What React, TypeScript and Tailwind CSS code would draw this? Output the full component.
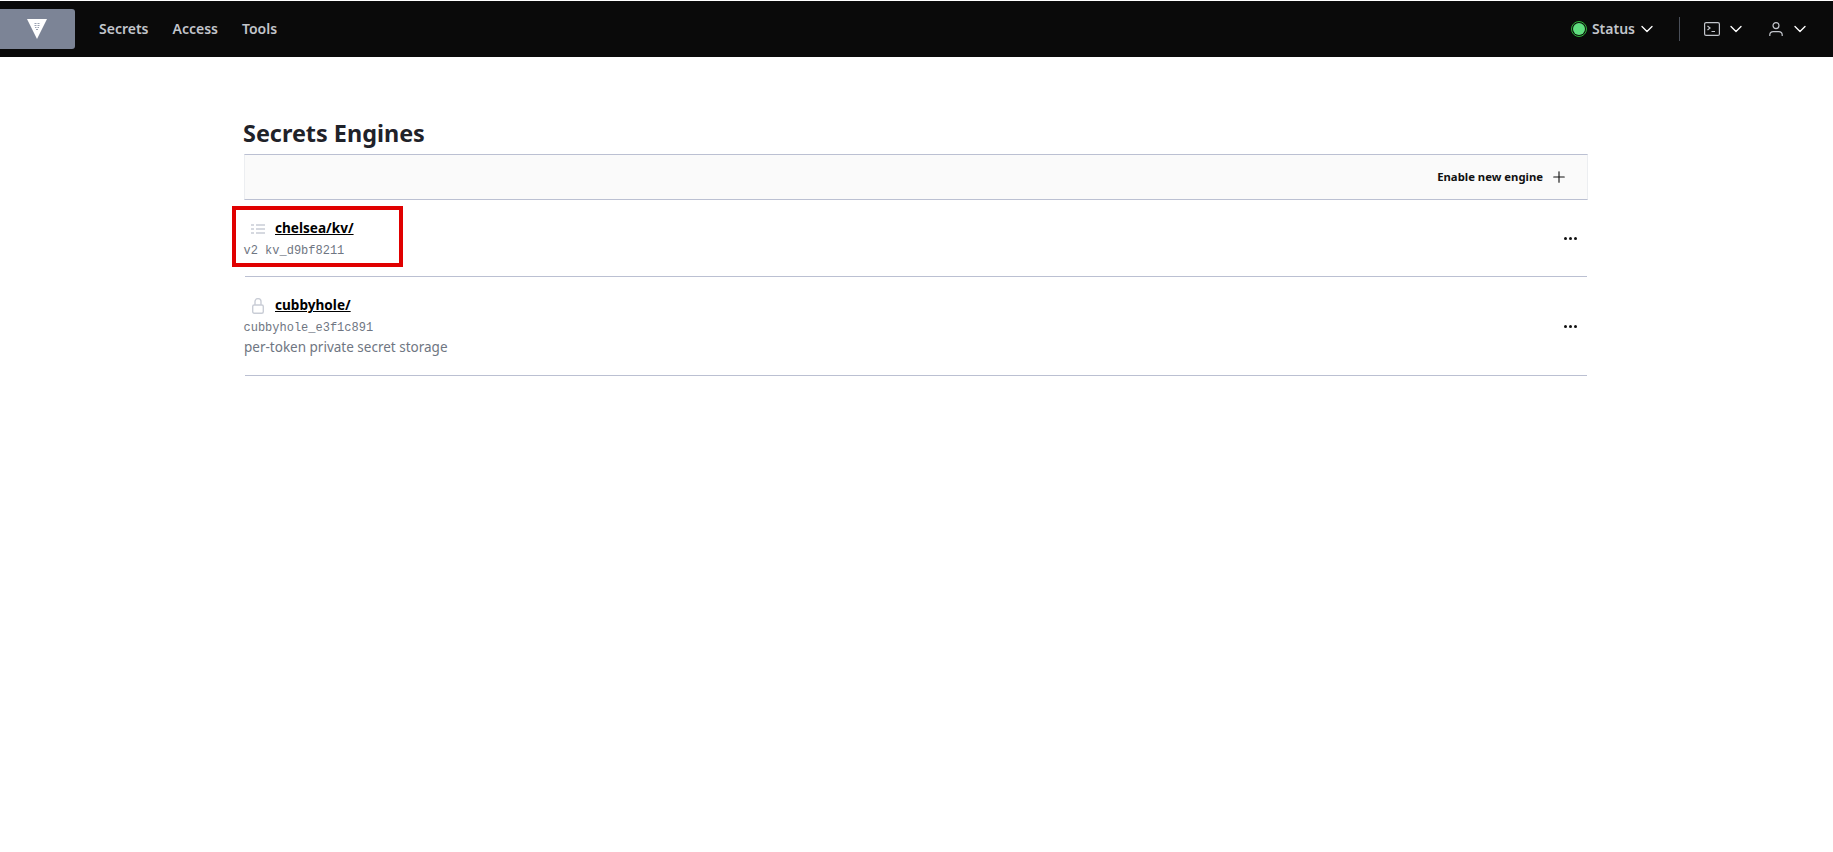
import React from "react";
import { ChevronDown, Plus } from "lucide-react";

const font = { fontFamily: '"Noto Sans", sans-serif' };
const mono = { fontFamily: '"Liberation Mono", monospace' };

const Logo = () => (
  <svg width="20" height="20" viewBox="0 0 20 20">
    <path d="M0 0h20L10 20z" fill="#fff" />
    <path
      d="M7.5 4h2v1h-2zM10.5 4h2v1h-2zM7.5 6h2v1h-2zM10.5 6h2v1h-2zM8 8h1.5v1H8zM10.5 8H12v1h-1.5zM9 10h2v1H9z"
      fill="#9aa1b1"
    />
  </svg>
);

const Dots = () => (
  <span className="mr-[10px] flex gap-[2px]">
    <i className="h-[3px] w-[3px] rounded-full bg-[#111]" />
    <i className="h-[3px] w-[3px] rounded-full bg-[#111]" />
    <i className="h-[3px] w-[3px] rounded-full bg-[#111]" />
  </span>
);

const App = () => {
  return (
    <div className="min-h-[852px] bg-white pt-px" style={font}>
      <nav className="flex h-14 items-center justify-between bg-[#0a0a0a] pr-[23px]">
        <div className="flex items-center">
          <div className="flex h-10 w-[75px] items-center justify-end rounded-r-[3px] bg-[#7c8496] pr-[28px]">
            <Logo />
          </div>
          <div className="ml-[24px] flex gap-6 pb-[2px] text-[14px] font-semibold text-[#c2c5cb]">
            <span>Secrets</span>
            <span>Access</span>
            <span>Tools</span>
          </div>
        </div>
        <div className="flex items-center text-[#c2c5cb]">
          <span className="h-4 w-4 rounded-full border-[1.5px] border-[#2eb039] bg-[#5fde7e] bg-clip-content p-px" />
          <span className="ml-[5px] pb-[2px] text-[14px] font-semibold">Status</span>
          <ChevronDown className="ml-[2px] h-5 w-5 text-white" strokeWidth={1.6} />
          <div className="ml-[22px] h-6 w-px bg-[#4a4f59]" />
          <svg className="ml-6 h-[16px] w-[16px]" viewBox="0 0 16 16" fill="none" stroke="currentColor" strokeWidth="1.2">
            <rect x="0.6" y="1.6" width="14.8" height="12.8" rx="1.5" />
            <path d="M3.5 5l2.5 2-2.5 2M7.5 10.5h3.5" />
          </svg>
          <ChevronDown className="ml-[6px] h-5 w-5 text-white" strokeWidth={1.6} />
          <svg className="ml-[23px] h-[14px] w-[14px]" viewBox="0 0 14 14" fill="none" stroke="currentColor" strokeWidth="1.2">
            <circle cx="7" cy="3.6" r="3" />
            <path d="M0.8 14v-1.2a3.4 3.4 0 0 1 3.4-3.2h5.6a3.4 3.4 0 0 1 3.4 3.2V14" />
          </svg>
          <ChevronDown className="ml-[7px] h-5 w-5 text-white" strokeWidth={1.6} />
        </div>
      </nav>

      <main className="ml-[244px] w-[1344px] pt-[60px]">
        <h1 className="-ml-px text-[23.4px] leading-[33px] font-bold text-[#1f2229]">Secrets Engines</h1>
        <div className="mt-1 flex h-[46px] items-center justify-end gap-[7px] border border-[#eceef1] border-t-[#bbc0d2] border-b-[#bbc0d2] bg-[#fafafa] pr-[19px] text-[11.3px] font-bold text-[#111]">
          <span>Enable new engine</span>
          <Plus className="h-[18px] w-[18px]" strokeWidth={1.5} />
        </div>

        <div className="relative mx-px flex h-[77px] items-center justify-between border-b border-[#bbc0d2]">
          <div className="absolute top-[6px] -left-[13px] h-[61px] w-[171px] border-4 border-[#e00000]" />
          <div className="-ml-px pt-[2px]">
            <div className="flex h-5 items-center">
              <svg className="ml-[7px] h-[10px] w-[14px] text-[#c9cdd6]" viewBox="0 0 14 10" fill="none" stroke="currentColor" strokeWidth="1.4">
                <path d="M0 1h3M5 1h9M0 5h3M5 5h9M0 9h3M5 9h9" />
              </svg>
              <span className="ml-[10px] text-[13.6px] font-bold text-black underline">chelsea/kv/</span>
            </div>
            <div className="mt-[3px] -ml-[0.5px] text-[12px] leading-[18px] text-[#6f7682]" style={mono}>
              v2 kv_d9bf8211
            </div>
          </div>
          <Dots />
        </div>

        <div className="mx-px flex h-[99px] items-center justify-between border-b border-[#bbc0d2]">
          <div className="-ml-px">
            <div className="flex h-5 items-center">
              <svg className="ml-2 h-4 w-3 text-[#c9cdd6]" viewBox="0 0 12 16" fill="none" stroke="currentColor" strokeWidth="1.4">
                <rect x="0.7" y="7" width="10.6" height="8.3" rx="1.5" />
                <path d="M3 7V3.6a3 3 0 0 1 6 0V7" />
              </svg>
              <span className="ml-[11px] text-[13.6px] font-bold text-black underline">cubbyhole/</span>
            </div>
            <div className="mt-[3px] -ml-[0.5px] text-[12px] leading-[18px] text-[#6f7682]" style={mono}>
              cubbyhole_e3f1c891
            </div>
            <div className="text-[13.5px] leading-[20px] text-[#6f7682]">per-token private secret storage</div>
          </div>
          <Dots />
        </div>
      </main>
    </div>
  );
};

export default App;
